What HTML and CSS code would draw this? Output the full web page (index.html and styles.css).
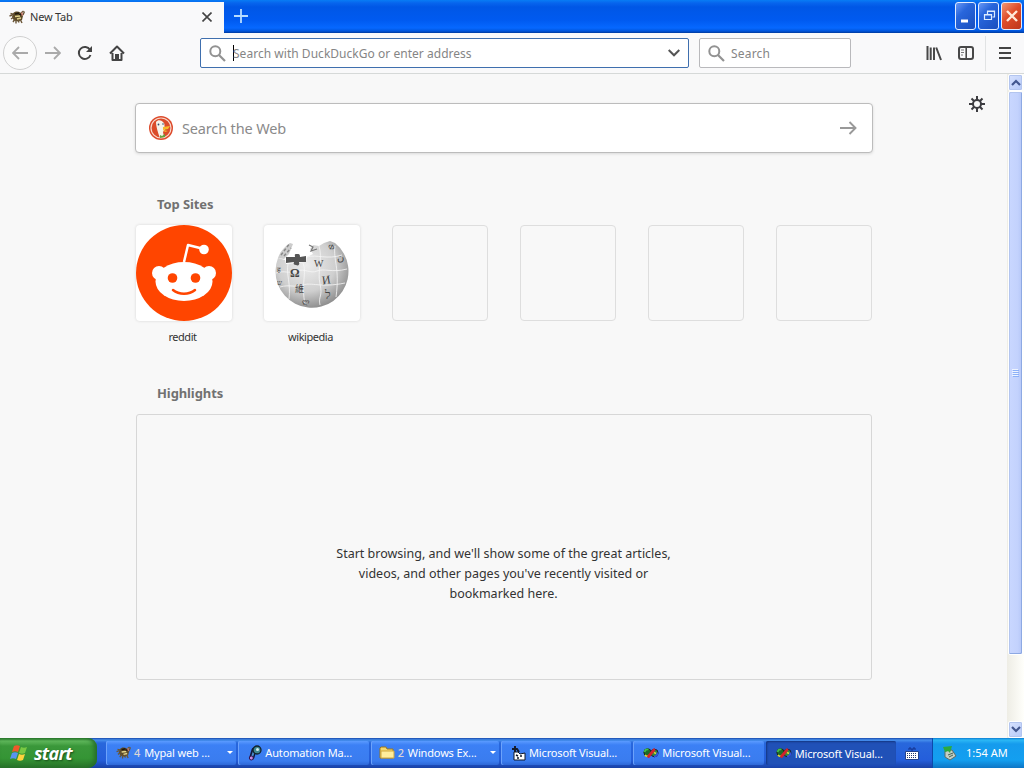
FILE: index.html
```html
<!DOCTYPE html>
<html lang="en">
<head>
    <meta charset="UTF-8">
    <meta name="viewport" content="width=device-width, initial-scale=1.0">
    <title>New Tab</title>
    <link rel="stylesheet" href="styles.css">
</head>
<body>

    <!-- Shared icons -->
    <svg class="defs" width="0" height="0">
        <symbol id="bee" viewBox="0 0 16 14">
            <path d="M4 3.500C6 1 9 1 12 3l2 3-1 4-4 1.500-4-1L3 7z" fill="#5c4a26"/>
            <path d="M.5 6l3-1M1.500 3.500L5 4.500M2 9l3-2M4 12l2-3M7 13.500V10M10 12.500L9 9.500M13 13l-2-4M12 3l2.500-2M14 5l1.500-3.500" stroke="#6a5638" stroke-width="1.400"/>
            <path d="M6 4l4-1M10 5l3-1" stroke="#1e1810" stroke-width="1.800"/>
            <path d="M6 6.500l5-.5M8 9l4-1" stroke="#e2d48c" stroke-width="1.600"/>
            <path d="M12.500 2.500l1 3" stroke="#c47a6a" stroke-width="1.600"/>
        </symbol>
        <symbol id="glass" viewBox="0 0 17 17">
            <circle cx="6.3" cy="6.3" r="5" fill="none" stroke="#929292" stroke-width="2"/>
            <path d="M10 10l6 6" stroke="#929292" stroke-width="2.2"/>
        </symbol>
        <symbol id="infinity" viewBox="0 0 16 12">
            <ellipse cx="4.500" cy="5.500" rx="3.600" ry="3.800" fill="#1d6a28" stroke="#1c2a1c"/>
            <ellipse cx="11.500" cy="6" rx="3.600" ry="3.800" fill="#2f8a3a" stroke="#1b1c3a"/>
            <path d="M1.500 5C2 3 3.500 2 5.500 2.500" fill="none" stroke="#3fc04a" stroke-width="1.800"/>
            <path d="M2 8c1 1.500 2.500 1.500 4 .5" fill="none" stroke="#e8dc35" stroke-width="1.600"/>
            <path d="M11 9.500c2 0 3.500-1.500 3.500-4" fill="none" stroke="#3450e0" stroke-width="1.800"/>
            <path d="M5.500 9.500L11 2.800" stroke="#d3232b" stroke-width="2.800" stroke-linecap="round"/>
            <path d="M11 5.500l2 1" stroke="#e5d63e" stroke-width="1.500"/>
        </symbol>
    </svg>

    <!-- Window title bar with tabs -->
    <div class="titlebar">
        <div class="tab">
            <svg class="tab-icon" width="16" height="14"><use href="#bee"/></svg>
            <span>New Tab</span>
            <svg class="tab-close" width="10" height="10" viewBox="0 0 10 10"><path d="M.5.5l9 9M9.5.5l-9 9" stroke="#444" stroke-width="1.6"/></svg>
        </div>
        <svg class="new-tab" width="14" height="14" viewBox="0 0 14 14"><path d="M7 0v14M0 7h14" stroke="#b7dcff" stroke-width="1.8"/></svg>
        <div class="window-buttons">
            <button class="win-btn"><svg width="18" height="24" viewBox="0 0 18 24"><path d="M4 17h7" stroke="#fff" stroke-width="3"/></svg></button>
            <button class="win-btn"><svg width="18" height="24" viewBox="0 0 18 24"><path d="M7.500 10V7h7v6h-2M7 7.500h8M4.500 10.500h7v5h-7zM4 11h8" fill="none" stroke="#dcecff" stroke-width="1.200"/></svg></button>
            <button class="win-btn win-close"><svg width="18" height="24" viewBox="0 0 18 24"><path d="M4 7l10 10M14 7L4 17" stroke="#ffe8d8" stroke-width="2.4"/></svg></button>
        </div>
    </div>

    <!-- Navigation toolbar -->
    <div class="toolbar">
        <button class="back"><svg width="16" height="14" viewBox="0 0 16 14"><path d="M16 7H1.500M7 1L1 7l6 6" fill="none" stroke="#aaa" stroke-width="1.8"/></svg></button>
        <svg class="forward" width="16" height="14" viewBox="0 0 16 14"><path d="M0 7h14.500M9 1l6 6-6 6" fill="none" stroke="#aaa" stroke-width="1.8"/></svg>
        <svg class="reload" width="16" height="16" viewBox="0 0 16 16"><path d="M13 4.800A6 6 0 1 0 13.500 10" fill="none" stroke="#444" stroke-width="2"/><path d="M15 1v6H9z" fill="#444"/></svg>
        <svg class="home" width="16" height="16" viewBox="0 0 16 16"><path d="M1 8.500L8 1.500l7 7M3.500 8v7h9V8" fill="none" stroke="#444" stroke-width="2" stroke-linejoin="round"/><path d="M6 9h4v6H6z" fill="#444"/></svg>
        <div class="urlbar">
            <svg width="17" height="17"><use href="#glass"/></svg>
            <span class="caret"></span>
            <span class="url-text">Search with DuckDuckGo or enter address</span>
            <svg class="dropmarker" width="12" height="8" viewBox="0 0 12 8"><path d="M.7 1L6 6.300 11.300 1" fill="none" stroke="#555" stroke-width="2"/></svg>
        </div>
        <div class="searchbar">
            <svg width="17" height="17"><use href="#glass"/></svg>
            <span>Search</span>
        </div>
        <svg class="library" width="16" height="16" viewBox="0 0 16 16"><path d="M1.500 1v14M4.700 2.500V15M8 2.500V15M10.200 2.500L15 15" stroke="#484848" stroke-width="2"/></svg>
        <svg class="sidebar" width="16" height="14" viewBox="0 0 16 14"><rect x="1" y="1" width="14" height="12" rx="2" fill="none" stroke="#484848" stroke-width="2"/><path d="M8.200 1v12" stroke="#484848" stroke-width="1.6"/><path d="M3 4h3M3 6.500h3M3 9h2" stroke="#777"/></svg>
        <div class="menu"><svg width="12" height="12" viewBox="0 0 12 12"><path d="M0 1h12M0 6h12M0 11h12" stroke="#444" stroke-width="1.800"/></svg></div>
    </div>

    <!-- New tab page -->
    <div class="viewport">
        <div class="page">
            <svg class="gear" width="16" height="16" viewBox="0 0 16 16"><path d="M8 0v16M0 8h16M2.500 2.500l11 11M13.500 2.500l-11 11" stroke="#3c3c40" stroke-width="2"/><circle cx="8" cy="8" r="4" fill="#f8f8f8" stroke="#3c3c40" stroke-width="2"/></svg>
            <div class="web-search">
                <svg width="24" height="24" viewBox="0 0 24 24">
                    <circle cx="12" cy="12" r="12" fill="#dd4b2c"/>
                    <circle cx="12" cy="12" r="10" fill="#db4b29" stroke="#f7d9cd" stroke-width="1.200"/>
                    <path d="M7 6c2-3 6-2 8 1 1 2 0 3 1 6l-2 3 1 5-4 1C9 17 7 10 7 6z" fill="#f5f2e9"/>
                    <path d="M14 11l7-1-2 3-5 1zM14 14l5 1-3 1z" fill="#f6b929"/>
                    <path d="M11 19l2 1 3-2v3l-5 1z" fill="#62a33d"/>
                    <circle cx="9.500" cy="8.500" r=".9" fill="#33506a"/><circle cx="14" cy="8" r=".8" fill="#33506a"/>
                </svg>
                <span>Search the Web</span>
                <svg class="go" width="17" height="14" viewBox="0 0 17 14"><path d="M0 7h15.500M9.500 1l6 6-6 6" fill="none" stroke="#999" stroke-width="1.900"/></svg>
            </div>

            <h2>Top Sites</h2>
            <div class="top-sites">
                <div class="site">
                    <div class="tile filled">
                        <svg width="96" height="96" viewBox="0 0 96 96">
                            <circle cx="48" cy="48" r="48" fill="#ff4500"/>
                            <path d="M48 37l4-17 16 4" fill="none" stroke="#fff" stroke-width="2.500" stroke-linejoin="round"/>
                            <circle cx="68" cy="24.500" r="4.800" fill="#fff"/>
                            <circle cx="23" cy="48" r="7" fill="#fff"/><circle cx="73" cy="48" r="7" fill="#fff"/>
                            <ellipse cx="48" cy="56.500" rx="28.500" ry="19.500" fill="#fff"/>
                            <circle cx="36.500" cy="53" r="4.800" fill="#ff4500"/><circle cx="59.500" cy="53" r="4.800" fill="#ff4500"/>
                            <path d="M37 65c6 5 16 5 22 0" fill="none" stroke="#ff4500" stroke-width="2.500" stroke-linecap="round"/>
                        </svg>
                    </div>
                    <span class="site-name">reddit</span>
                </div>
                <div class="site">
                    <div class="tile filled">
                        <svg width="96" height="96" viewBox="0 0 96 96">
                            <defs>
                                <radialGradient id="globe" cx="42%" cy="36%" r="66%"><stop offset="0" stop-color="#ececec"/><stop offset=".6" stop-color="#cfcfcf"/><stop offset="1" stop-color="#8c8c8c"/></radialGradient>
                            </defs>
                            <path d="M14 33l7 2 1 4 20-2 1-5 6-3-3-5 3-4 6 1 5-3 6-2 5 2A36.500 36.500 0 1 1 14 33z" fill="url(#globe)"/>
                            <path d="M14 33c2-6 6-11 12-15l3 1-4 10-5 5z" fill="#ccc"/>
                            <path d="M22 32h9c0-2-1-3 2-3s3 1 3 3l6-1v6h-7c1 3-1 4-3 3-2 0-3-1-2-3l-8 1z" fill="#555"/>
                            <g fill="none" stroke="#f6f6f6" stroke-width=".8">
                                <path d="M12 48c8-3 13 1 21-2s13 3 20 0 15 2 30-2M16 62c10-3 15 1 23-2s18 3 42-2M43 32c10-3 20 3 35-2"/>
                                <path d="M24 39c-2 10 3 20 1 35M39 38c4 10-2 20 2 42M55 21c4 13-2 25 1 38s-2 12 0 21M71 21c-2 14 5 22 1 51"/>
                            </g>
                            <g fill="#444" font-family="Liberation Serif, serif">
                                <text x="26" y="52" font-size="12" font-weight="bold">Ω</text>
                                <text x="50" y="42" font-size="10">W</text>
                                <text x="58" y="59" font-size="12" transform="rotate(-8 62 55)">И</text>
                                <text x="73" y="36" font-size="10">ن</text>
                                <text x="61" y="74" font-size="12">ל</text>
                                <text class="glyph-cjk" x="31" y="67" font-size="9">維</text>
                                <text x="64" y="24" font-size="8" transform="rotate(30 66 22)">Ф</text>
                                <text x="13" y="47" font-size="7">ह</text>
                                <text x="13" y="60" font-size="7">ש</text>
                                <text x="38" y="79" font-size="7">ლ</text>
                            </g>
                            <path d="M17 30l9-12M20 31l7-8" fill="none" stroke="#888" stroke-width="1.500" stroke-dasharray="3 2"/>
                            <path d="M45 20l4 2-2 4 6-2" fill="none" stroke="#777" stroke-width="1.200"/>
                        </svg>
                    </div>
                    <span class="site-name">wikipedia</span>
                </div>
                <div class="site"><div class="tile"></div></div>
                <div class="site"><div class="tile"></div></div>
                <div class="site"><div class="tile"></div></div>
                <div class="site"><div class="tile"></div></div>
            </div>

            <h2 class="highlights-title">Highlights</h2>
            <div class="highlights">
                <p>
                    Start browsing, and we'll show some of the great articles,<br>
                    videos, and other pages you've recently visited or<br>
                    bookmarked here.
                </p>
            </div>
        </div>
        <div class="scrollbar">
            <div class="scroll-btn"><svg width="10" height="7" viewBox="0 0 10 7"><path d="M1 6l4-4 4 4" fill="none" stroke="#43578f" stroke-width="2.200"/></svg></div>
            <div class="thumb"><svg width="7" height="8" viewBox="0 0 7 8"><path d="M0 .5h6M0 2.500h6M0 4.500h6M0 6.500h6" stroke="#eef4ff"/><path d="M1 1.500h6M1 3.500h6M1 5.500h6M1 7.500h6" stroke="#8cb0f8"/></svg></div>
            <div class="scroll-btn"><svg width="10" height="7" viewBox="0 0 10 7"><path d="M1 1l4 4 4-4" fill="none" stroke="#43578f" stroke-width="2.200"/></svg></div>
        </div>
    </div>

    <!-- Taskbar -->
    <div class="taskbar">
        <button class="start">
            <svg width="20" height="18" viewBox="0 0 20 18">
                <path d="M4 2c2-1 4-1 6 0L8 8C6 7 4 7 2 8z" fill="#ef582a"/><path d="M11 3c2 1 4 1 6 0l-2 6c-2 1-4 1-6 0z" fill="#79c843"/>
                <path d="M2 9c2-1 4-1 6 0l-2 6c-2-1-4-1-6 0z" fill="#5894f0"/><path d="M9 10c2 1 4 1 6 0l-2 6c-2 1-4 1-6 0z" fill="#ffd33d"/>
            </svg>
            <span>start</span>
        </button>
        <div class="tasks">
            <div class="task"><svg width="15" height="13"><use href="#bee"/></svg><b class="count">4</b><span>Mypal web ...</span><i class="arrow"></i></div>
            <div class="task">
                <svg width="14" height="16" viewBox="0 0 14 16"><path d="M4 12L6 5" stroke="#101738" stroke-width="5" stroke-linecap="round"/><path d="M4 12l2-6" stroke="#4a8fd0" stroke-width="2"/><circle cx="9" cy="5" r="4" fill="#3f8790" stroke="#12232c" stroke-width="1.300"/><circle cx="9.500" cy="4.500" r="1.500" fill="#d3ecec"/><circle cx="3.300" cy="13" r="2" fill="#c58be0" stroke="#31104e"/></svg>
                <span class="long">Automation Ma...</span>
            </div>
            <div class="task folder"><svg width="16" height="13" viewBox="0 0 16 13"><path d="M1 2l1-1h5l1 2h6v9H1z" fill="#f4d86c" stroke="#987623"/><path d="M2 5h13v7H2z" fill="#ffed9b" stroke="#d0a73f"/></svg><b class="count">2</b><span>Windows Ex...</span><i class="arrow"></i></div>
            <div class="task">
                <svg width="15" height="16" viewBox="0 0 15 16"><path d="M1 4h5l2 3M4 1v6" fill="none" stroke="#151c2c" stroke-width="2"/><path d="M3 7l4 0 2 2 5-1v7H3z" fill="#fff" stroke="#111829"/><path d="M5 10l2 1M9 11h2M6 13h2" stroke="#111829" stroke-width="1.500"/></svg>
                <span class="long">Microsoft Visual...</span>
            </div>
            <div class="task"><svg width="16" height="12"><use href="#infinity"/></svg><span class="long">Microsoft Visual...</span></div>
            <div class="task active"><svg width="16" height="12"><use href="#infinity"/></svg><span class="long">Microsoft Visual...</span></div>
        </div>
        <svg class="keyboard" width="14" height="13" viewBox="0 0 14 13"><path d="M4 3V1h2v2h2V1h2v2" fill="none" stroke="#15328c"/><path d="M.5 4.500h13v8H.5z" fill="#fff" stroke="#24438b"/><path d="M2 6.500h10M2 8.500h10M2 10.500h10" stroke="#23396f" stroke-dasharray="1 1"/></svg>
        <div class="tray">
            <svg width="15" height="16" viewBox="0 0 15 16"><path d="M3 6l7-1 4 6-6 4-5-3z" fill="#c4cfc6" stroke="#5d6d67"/><path d="M1 2l9-1-2 7-2-2-3 1z" fill="#2caa3e"/><path d="M6 10l5-2M7 12l4-2" stroke="#456355"/></svg>
            <span>1:54 AM</span>
        </div>
    </div>

</body>
</html>
```
FILE: styles.css
```css
body {
    margin: 0;
    width: 1024px;
    height: 768px;
    overflow: hidden;
    display: flex;
    flex-direction: column;
    font-family: "Noto Sans", sans-serif;
    font-size: 12px;
    color: #333;
    background: #f8f8f8;
}
span {
    white-space: nowrap;
}
svg {
    flex-shrink: 0;
}
button {
    padding: 0;
    border: none;
    box-sizing: border-box;
}
.defs {
    position: absolute;
}

/* title bar */
.titlebar {
    height: 33px;
    display: flex;
    box-sizing: border-box;
    background: linear-gradient(#087cf5 0, #0765ed 3px, #0057e6 7px, #005af0 20px, #0668ff 28px, #0055dc 31px, #003a9d 33px);
}
.tab {
    width: 224px;
    height: 31px;
    margin-top: 2px;
    display: flex;
    align-items: center;
    box-sizing: border-box;
    padding: 0 12px 2px 9px;
    background: #f9f9fa;
    font-size: 11px;
    letter-spacing: -0.2px;
}
.tab-icon {
    margin-right: 5px;
}
.tab-close {
    margin-left: auto;
}
.new-tab {
    margin: 9px 0 0 10px;
}
.window-buttons {
    display: flex;
    gap: 2px;
    margin: 2px 2px 0 auto;
}
.win-btn {
    width: 21px;
    height: 28px;
    display: flex;
    align-items: center;
    justify-content: center;
    border: 1px solid #e2edff;
    border-radius: 3px;
    background: linear-gradient(135deg, #6998f5, #2866dc 35%, #194ebe);
}
.win-close {
    background: linear-gradient(135deg, #f29775, #df4c28 45%, #bd361b);
}

/* toolbar */
.toolbar {
    height: 41px;
    display: flex;
    align-items: center;
    box-sizing: border-box;
    border-bottom: 1px solid #d6d9d8;
    padding-left: 3px;
    background: #f9f9fa;
}
.back {
    width: 34px;
    height: 34px;
    display: flex;
    align-items: center;
    justify-content: center;
    border: 1px solid #d0d0d0;
    border-radius: 50%;
    background: #fbfbfb;
}
.forward {
    margin-left: 8px;
}
.reload,
.home {
    margin-left: 16px;
}
.urlbar,
.searchbar {
    display: flex;
    align-items: center;
    height: 30px;
    box-sizing: border-box;
    border: 1px solid #b9b9bc;
    border-radius: 2px;
    padding-left: 8px;
    background: #fff;
    color: #858585;
}
.urlbar {
    width: 489px;
    margin-left: 75px;
    border-color: #3f6fae;
}
.caret {
    width: 1px;
    height: 16px;
    margin: 0 -1px 0 7px;
    background: #000;
}
.url-text {
    letter-spacing: 0.03px;
}
.dropmarker {
    margin: 0 8px 0 auto;
}
.searchbar {
    width: 152px;
    margin-left: 10px;
}
.searchbar span {
    margin-left: 6px;
    letter-spacing: 0.2px;
}
.library {
    margin-left: 75px;
}
.sidebar {
    margin-left: 16px;
}
.menu {
    width: 38px;
    height: 35px;
    margin-left: 11px;
    display: flex;
    align-items: center;
    box-sizing: border-box;
    border-left: 1px solid #e1e3e4;
    padding-left: 13px;
}

/* new tab page */
.viewport {
    display: flex;
    height: 664px;
    overflow: hidden;
}
.page {
    position: relative;
    width: 1007px;
    box-sizing: border-box;
    padding: 29px 134px 0 135px;
    background: #f8f8f8;
}
.gear {
    position: absolute;
    top: 22px;
    right: 22px;
}
.web-search {
    height: 50px;
    display: flex;
    align-items: center;
    box-sizing: border-box;
    border: 1px solid #bcbcbc;
    border-radius: 4px;
    padding: 0 15px 0 13px;
    background: #fff;
    color: #8a8a8a;
    font-size: 14.5px;
    letter-spacing: -0.15px;
    box-shadow: 0 1px 3px rgba(0, 0, 0, 0.12);
}
.web-search span {
    margin-left: 9px;
}
.go {
    margin-left: auto;
}
h2 {
    margin: 41px 0 11px 22px;
    font-size: 13px;
    line-height: 20px;
    font-weight: bold;
    letter-spacing: -0.1px;
    color: #717171;
}
.top-sites {
    display: flex;
    gap: 32px;
    margin-left: 1px;
    height: 126px;
}
.site {
    width: 96px;
}
.tile {
    height: 96px;
    box-sizing: border-box;
    border: 1px solid #dedede;
    border-radius: 4px;
}
.filled {
    border: none;
    background: #fff;
    box-shadow: 0 0 3px #d4d4d4;
}
.filled svg {
    display: block;
}
.site-name {
    display: block;
    margin: 8px 3px 0 0;
    text-align: center;
    font-size: 11px;
    line-height: 16px;
    letter-spacing: -0.45px;
}
.highlights-title {
    margin: 32px 0 11px 22px;
}
.highlights {
    width: 736px;
    height: 266px;
    margin-left: 1px;
    box-sizing: border-box;
    border: 1px solid #d7d7d7;
    border-radius: 3px;
    padding-top: 129px;
}
.highlights p {
    margin: 0 1px 0 0;
    text-align: center;
    line-height: 20px;
    font-size: 12.5px;
}
.glyph-cjk {
    font-family: "Noto Sans CJK TC", sans-serif;
}

/* scrollbar */
.scrollbar {
    width: 17px;
    display: flex;
    flex-direction: column;
    box-sizing: border-box;
    padding: 0 1px;
    background: linear-gradient(90deg, #eeede5, #fffffb);
}
.scroll-btn,
.thumb {
    display: flex;
    align-items: center;
    justify-content: center;
    box-sizing: border-box;
    border: 1px solid #fff;
    border-radius: 2px;
    background: linear-gradient(135deg, #d7e2ff, #b6c9f8);
    box-shadow: inset 0 0 0 1px #b3c5ef;
}
.scroll-btn {
    height: 17px;
}
.scroll-btn:last-child {
    margin-top: auto;
}
.thumb {
    height: 564px;
    background: linear-gradient(90deg, #c9d7ff, #c3d2fd 65%, #b6c7f7);
    box-shadow: inset -1px -1px #8da9e3, inset 1px 1px #b3c5ef;
}

/* taskbar */
.taskbar {
    height: 30px;
    display: flex;
    background: linear-gradient(#1849ad 0, #468fec 2px, #2867dc 5px, #245edb 22px, #1941a5 30px);
    color: #fff;
    font-size: 11px;
}
.start {
    width: 97px;
    display: flex;
    align-items: center;
    padding: 0 0 1px 10px;
    border-radius: 0 9px 9px 0;
    background: linear-gradient(#297c2b 0, #60b95c 3px, #3a973a 8px, #359535 20px, #287229 30px);
    box-shadow: inset -3px 0 4px #266e2b;
    color: #fff;
}
.start span {
    margin-left: 4px;
    font: italic bold 18px "Open Sans", sans-serif;
    letter-spacing: -0.7px;
    text-shadow: 1px 1px 2px #174d19;
}
.tasks {
    width: 790px;
    display: flex;
    gap: 2px;
    margin-left: 9px;
    padding: 3px 0;
    box-sizing: border-box;
}
.task {
    flex: 1 1 0;
    min-width: 0;
    display: flex;
    align-items: center;
    box-sizing: border-box;
    padding: 0 3px 1px 10px;
    border-radius: 2px;
    background: linear-gradient(#5b9bff, #3c80f5 4px, #3a7cef 20px, #2e68d7);
    box-shadow: inset 1px 0 #6ca2fb;
    letter-spacing: -0.15px;
}
.folder {
    padding-left: 8px;
}
.active {
    padding-bottom: 0;
    background: #2051b7;
    box-shadow: inset 1px 1px 2px #143580;
}
.count {
    margin: 0 4px 0 3px;
    color: #dbd5d5;
    font-weight: 500;
}
.task .long {
    margin-left: 3px;
}
.arrow {
    margin-left: auto;
    border: 3px solid transparent;
    border-top-color: #fff;
    border-bottom: 0;
}
.keyboard {
    margin: 9px 0 0 9px;
}
.tray {
    flex: 1;
    margin-left: 13px;
    display: flex;
    align-items: center;
    padding: 0 0 1px 9px;
    border-left: 1px solid #0c4aab;
    background: linear-gradient(#0d7bd0 0, #2cb8f5 2px, #159bed 6px, #139ff0 22px, #0d75c5 30px);
}
.tray span {
    margin-left: 9px;
}
```
